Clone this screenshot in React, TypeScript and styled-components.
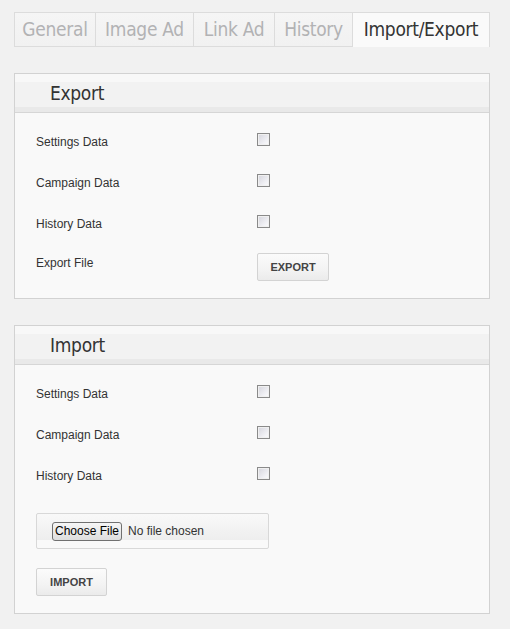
import React from "react";
import styled, { createGlobalStyle } from "styled-components";

const Global = createGlobalStyle`
  html, body { margin: 0; padding: 0; }
  body {
    background: #f1f1f1;
    font-family: "Liberation Sans", Arial, sans-serif;
    font-size: 12px;
    color: #333;
  }
`;

const Page = styled.div`
  width: 476px;
  padding: 12px 0 0 14px;
  display: flex;
  flex-direction: column;
  gap: 26px;
`;

const Tabs = styled.div`
  display: flex;
  align-items: flex-start;
`;

const Tab = styled.div<{ $active?: boolean; $first?: boolean; $w: number }>`
  box-sizing: border-box;
  width: ${(p) => p.$w}px;
  height: 35px;
  font-family: "DejaVu Sans Condensed", "DejaVu Sans", sans-serif;
  font-stretch: condensed;
  font-size: 19px;
  letter-spacing: -0.3px;
  line-height: 33px;
  text-align: center;
  white-space: nowrap;
  border-top: 1px solid #dcdcdc;
  border-right: 1px solid #dcdcdc;
  border-left: ${(p) => (p.$first ? "1px solid #dcdcdc" : "none")};
  border-bottom: ${(p) => (p.$active ? "none" : "1px solid #dcdcdc")};
  background: ${(p) =>
    p.$active ? "#fafafa" : "linear-gradient(#f5f5f5, #f1f1f1)"};
  color: ${(p) => (p.$active ? "#333" : "#b2b2b4")};
`;

const Panel = styled.section`
  border: 1px solid #d2d2d2;
  background: #f9f9f9;
`;

const PanelHead = styled.div`
  height: 39px;
  box-sizing: border-box;
  padding-left: 35px;
  border-bottom: 1px solid #d6d6d6;
  background: linear-gradient(
    #f8f8f8 0,
    #f8f8f8 20%,
    #f2f2f2 22%,
    #f2f2f2 86%,
    #e9e9e9 88%,
    #e9e9e9 100%
  );
  font-family: "DejaVu Sans Condensed", "DejaVu Sans", sans-serif;
  font-stretch: condensed;
  font-size: 19px;
  letter-spacing: -0.3px;
  line-height: 38px;
  color: #333;
`;

const PanelBody = styled.div`
  padding: 20px 21px 17px;
`;

const Row = styled.div`
  display: grid;
  grid-template-columns: 221px auto;
  align-items: start;
  height: 41px;
`;

const ActionRow = styled.div`
  display: grid;
  grid-template-columns: 221px auto;
  align-items: start;
  margin-top: -3px;
`;

const Label = styled.span<{ $pt?: number }>`
  line-height: 16px;
  padding-top: ${(p) => p.$pt ?? 1}px;
  color: #333;
`;

const Check = styled.input.attrs({ type: "checkbox" })`
  appearance: none;
  margin: 0;
  width: 13px;
  height: 13px;
  box-sizing: border-box;
  border: 1px solid #8a8a8a;
  background: linear-gradient(135deg, #d4d4dc, #f2f2f6 70%, #fbfbfb);
  box-shadow: inset 0 0 0 1px #f0f0f0;
`;

const Btn = styled.button<{ $w: number }>`
  width: ${(p) => p.$w}px;
  height: 28px;
  box-sizing: border-box;
  margin: 0;
  padding: 0;
  border: 1px solid #d3d3d3;
  border-radius: 2px;
  background: linear-gradient(#fbfbfb 0, #f3f3f3 60%, #ebebeb 100%);
  font-family: "Liberation Sans", Arial, sans-serif;
  font-weight: bold;
  font-size: 11px;
  color: #444;
  text-align: center;
`;

const FileBox = styled.div`
  width: 233px;
  height: 36px;
  box-sizing: border-box;
  margin-top: 5px;
  padding: 8px 0 0 15px;
  border: 1px solid #d8d8d8;
  border-radius: 2px;
  background: linear-gradient(#f9f9f9 0, #f3f3f3 40%, #eeeeee 75%, #f9f9f9 76%);
  display: flex;
  align-items: flex-start;
  gap: 6px;
`;

const ChooseBtn = styled.span`
  display: inline-block;
  box-sizing: border-box;
  width: 70px;
  height: 19px;
  border: 1px solid #707070;
  border-radius: 3px;
  background: linear-gradient(#f6f6f6, #dddddd);
  font-size: 12px;
  line-height: 17px;
  text-align: center;
  color: #000;
`;

const FileText = styled.span`
  line-height: 19px;
  color: #333;
`;

const ImportBtnWrap = styled.div`
  margin-top: 19px;
`;

const tabs: [string, number][] = [
  ["General", 82],
  ["Image Ad", 98],
  ["Link Ad", 81],
  ["History", 78],
  ["Import/Export", 137],
];

const rows = ["Settings Data", "Campaign Data", "History Data"];

export default function App() {
  return (
    <>
      <Global />
      <Page>
        <Tabs>
          {tabs.map(([t, w], i) => (
            <Tab key={t} $w={w} $first={i === 0} $active={i === 4}>
              {t}
            </Tab>
          ))}
        </Tabs>

        <Panel>
          <PanelHead>Export</PanelHead>
          <PanelBody>
            {rows.map((r) => (
              <Row key={r}>
                <Label>{r}</Label>
                <Check />
              </Row>
            ))}
            <ActionRow>
              <Label $pt={2}>Export File</Label>
              <Btn $w={72}>EXPORT</Btn>
            </ActionRow>
          </PanelBody>
        </Panel>

        <Panel>
          <PanelHead>Import</PanelHead>
          <PanelBody>
            {rows.map((r) => (
              <Row key={r}>
                <Label>{r}</Label>
                <Check />
              </Row>
            ))}
            <FileBox>
              <ChooseBtn>Choose File</ChooseBtn>
              <FileText>No file chosen</FileText>
            </FileBox>
            <ImportBtnWrap>
              <Btn $w={71}>IMPORT</Btn>
            </ImportBtnWrap>
          </PanelBody>
        </Panel>
      </Page>
    </>
  );
}
